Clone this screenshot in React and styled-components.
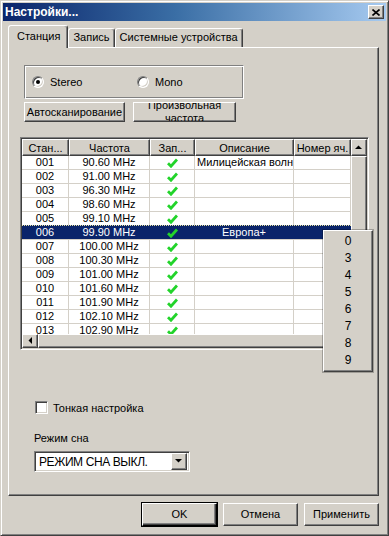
import React from "react"
import styled, { createGlobalStyle, css } from "styled-components"

const GlobalStyle = createGlobalStyle`
    * { box-sizing: border-box; }
    body {
        margin: 0;
        background: #d4d0c8;
        font-family: "Liberation Sans", Arial, sans-serif;
        font-size: 11px;
        color: #000;
    }
`

const raised = css`
    background: #d4d0c8;
    border: 1px solid;
    border-color: #fff #404040 #404040 #fff;
    box-shadow: inset -1px -1px #808080, inset 1px 1px #d4d0c8;
`
const sunken = css`
    border: 1px solid;
    border-color: #808080 #fff #fff #808080;
    box-shadow: inset 1px 1px #404040, inset -1px -1px #d4d0c8;
`

const Window = styled.div`
    width: 389px;
    height: 536px;
    background: #d4d0c8;
    border: 1px solid;
    border-color: #d4d0c8 #404040 #404040 #d4d0c8;
    box-shadow: inset 1px 1px #fff, inset -1px -1px #808080;
    padding: 2px;
    display: flex;
    flex-direction: column;
`
const TitleBar = styled.div`
    height: 18px;
    display: flex;
    align-items: center;
    justify-content: space-between;
    padding: 0 2px 0 2px;
    background: linear-gradient(to right, #0a246a 0%, #3a6ea5 45%, #a6caf0 100%);
`
const TitleText = styled.div`
    color: #fff;
    font-weight: bold;
    font-size: 12px;
`
const CloseButton = styled.div`
    ${raised};
    width: 16px;
    height: 14px;
    display: flex;
    align-items: center;
    justify-content: center;
`
const Body = styled.div`
    padding: 4px 7px 0 5px;
    display: flex;
    flex-direction: column;
`
const TabRow = styled.div`
    height: 23px;
    margin-bottom: -1px;
    display: flex;
    align-items: flex-end;
    position: relative;
    z-index: 1;
`
const Tab = styled.div`
    height: ${p => (p.$active ? "23px" : "19px")};
    margin-bottom: ${p => (p.$active ? "0" : "1px")};
    padding: ${p => (p.$active ? "4px 7px 0 8px" : "2px 4px 0 4px")};
    background: #d4d0c8;
    border: 1px solid;
    border-bottom: none;
    border-color: #fff #404040 transparent #fff;
    border-radius: 3px 3px 0 0;
    box-shadow: inset -1px 0 #808080;
    white-space: nowrap;
`
const Panel = styled.div`
    height: 449px;
    position: relative;
    border: 1px solid;
    border-color: #fff #404040 #404040 #fff;
    box-shadow: inset -1px -1px #808080;
    display: flex;
    flex-direction: column;
`
const GroupBox = styled.div`
    margin: 17px 0 0 15px;
    width: 220px;
    height: 34px;
    border: 1px solid;
    border-color: #808080 #fff #fff #808080;
    box-shadow: inset 1px 1px #fff, inset -1px -1px #808080;
    display: flex;
    align-items: center;
    padding-left: 7px;
`
const RadioItem = styled.label`
    width: 105px;
    display: flex;
    align-items: center;
    gap: 6px;
`
const RadioCircle = styled.span`
    width: 12px;
    height: 12px;
    border-radius: 50%;
    background: #fff;
    border: 1px solid;
    border-color: #808080 #fff #fff #808080;
    box-shadow: inset 1px 1px #404040, inset -1px -1px #d4d0c8;
    display: flex;
    align-items: center;
    justify-content: center;
    &::after {
        content: "";
        width: 4px;
        height: 4px;
        border-radius: 50%;
        background: ${p => (p.$checked ? "#000" : "transparent")};
    }
`
const ButtonRow = styled.div`
    margin: 3px 0 0 15px;
    display: flex;
    gap: 8px;
`
const Button = styled.div`
    ${raised};
    width: ${p => p.$w}px;
    height: ${p => p.$h || 20}px;
    display: flex;
    flex-direction: column;
    align-items: center;
    justify-content: center;
    overflow: hidden;
    line-height: 13px;
    white-space: nowrap;
    ${p => p.$default && css`
        outline: 1px solid #000;
        outline-offset: 0;
        border-color: #fff #000 #000 #fff;
        box-shadow: inset -1px -1px #404040, inset -2px -2px #808080;
    `}
`
const Table = styled.div`
    ${sunken};
    margin: 15px 0 0 11px;
    width: 349px;
    height: 213px;
    padding: 1px;
    background: #fff;
    display: grid;
    grid-template-columns: 329px 16px;
    grid-template-rows: 195px 14px;
`
const Grid = styled.div`
    overflow: hidden;
    display: flex;
    flex-direction: column;
`
const columns = "47px 81px 45px 99px 57px"
const HeaderRow = styled.div`
    display: grid;
    grid-template-columns: ${columns};
    height: 17px;
    flex-shrink: 0;
`
const HeaderCell = styled.div`
    ${raised};
    display: flex;
    align-items: center;
    justify-content: center;
    white-space: nowrap;
    overflow: hidden;
`
const Row = styled.div`
    display: grid;
    grid-template-columns: ${columns};
    height: 14px;
    flex-shrink: 0;
    border-bottom: 1px solid #d4d0c8;
    background: ${p => (p.$selected ? "#0a246a" : "#fff")};
    color: ${p => (p.$selected ? "#fff" : "#000")};
    ${p => p.$selected && css`
        border-top: 1px dotted #e8e4a0;
        margin-top: -1px;
        height: 15px;
    `}
`
const Cell = styled.div`
    border-right: 1px solid ${p => (p.$selected ? "#0a246a" : "#d4d0c8")};
    display: flex;
    align-items: center;
    justify-content: ${p => (p.$left ? "flex-start" : "center")};
    padding-left: ${p => (p.$left ? "2px" : "0")};
    white-space: nowrap;
    overflow: hidden;
    line-height: 13px;
`
const VScroll = styled.div`
    background: #e6e3de;
    display: flex;
    flex-direction: column;
`
const ScrollButton = styled.div`
    ${raised};
    width: ${p => p.$w}px;
    height: ${p => p.$h}px;
    flex-shrink: 0;
    display: flex;
    align-items: center;
    justify-content: center;
`
const VThumb = styled.div`
    ${raised};
    height: 140px;
`
const HScroll = styled.div`
    grid-column: 1 / span 2;
    background: #e6e3de;
    display: flex;
`
const HThumb = styled.div`
    ${raised};
    width: 300px;
`
const CheckRow = styled.label`
    margin: 51px 0 0 26px;
    display: flex;
    align-items: center;
    gap: 5px;
`
const CheckBox = styled.span`
    width: 13px;
    height: 13px;
    background: #fff;
    ${sunken};
`
const Label = styled.div`
    margin: 18px 0 0 25px;
    height: 13px;
    line-height: 13px;
`
const Select = styled.div`
    ${sunken};
    margin: 6px 0 0 25px;
    width: 156px;
    height: 21px;
    background: #fff;
    display: flex;
    align-items: center;
    justify-content: space-between;
    padding: 2px 2px 2px 4px;
    font-size: 12px;
    letter-spacing: -0.4px;
`
const Popup = styled.div`
    ${raised};
    position: absolute;
    left: 314px;
    top: 182px;
    width: 50px;
    height: 142px;
    padding: 1px 2px;
    z-index: 2;
    outline: 1px solid rgba(0, 0, 0, 0.25);
    outline-offset: 0;
`
const PopupItem = styled.div`
    height: 17px;
    display: flex;
    align-items: center;
    justify-content: center;
    font-size: 12px;
`
const Footer = styled.div`
    margin-top: 7px;
    display: flex;
    justify-content: flex-end;
    gap: 6px;
`

const Check = () => (
    <svg width="11" height="10" viewBox="0 0 11 10">
        <path d="M1 5.2 L4 8.2 L10 1.5" fill="none" stroke="#22d42a" strokeWidth="2.8" />
    </svg>
)

const Arrow = ({ dir }) => {
    const pts = {
        up: "0,4 7,4 3.5,0.5",
        down: "0,0 7,0 3.5,3.5",
        left: "4,0 4,7 0.5,3.5",
    }[dir]
    const w = dir === "left" ? 5 : 8
    const h = dir === "left" ? 8 : 5
    return (
        <svg width={w} height={h} viewBox={`0 0 ${w} ${h}`}>
            <polygon points={pts} fill="#000" />
        </svg>
    )
}

const stations = [
    ["001", "90.60 MHz", "Милицейская волна"],
    ["002", "91.00 MHz", ""],
    ["003", "96.30 MHz", ""],
    ["004", "98.60 MHz", ""],
    ["005", "99.10 MHz", ""],
    ["006", "99.90 MHz", "Европа+"],
    ["007", "100.00 MHz", ""],
    ["008", "100.30 MHz", ""],
    ["009", "101.00 MHz", ""],
    ["010", "101.60 MHz", ""],
    ["011", "101.90 MHz", ""],
    ["012", "102.10 MHz", ""],
    ["013", "102.90 MHz", ""],
    ["014", "103.40 MHz", ""],
]

const menuItems = ["0", "3", "4", "5", "6", "7", "8", "9"]

class App extends React.Component {
    showRows = () => {
        return stations.map(([num, freq, desc]) => {
            const selected = num === "006"
            return (
                <Row key={num} $selected={selected}>
                    <Cell $selected={selected}>{num}</Cell>
                    <Cell $selected={selected}>{freq}</Cell>
                    <Cell $selected={selected}><Check /></Cell>
                    <Cell $selected={selected} $left={desc.length > 12}>{desc}</Cell>
                    <Cell $selected={selected}></Cell>
                </Row>
            )
        })
    }

    render() {
        return (
            <>
                <GlobalStyle />
                <Window>
                    <TitleBar>
                        <TitleText>Настройки...</TitleText>
                        <CloseButton>
                            <svg width="8" height="7" viewBox="0 0 8 7">
                                <path d="M0.5 0.5 L7.5 6.5 M7.5 0.5 L0.5 6.5" stroke="#000" strokeWidth="1.6" />
                            </svg>
                        </CloseButton>
                    </TitleBar>
                    <Body>
                        <TabRow>
                            <Tab $active>Станция</Tab>
                            <Tab>Запись</Tab>
                            <Tab>Системные устройства</Tab>
                        </TabRow>
                        <Panel>
                            <GroupBox>
                                <RadioItem><RadioCircle $checked />Stereo</RadioItem>
                                <RadioItem><RadioCircle />Mono</RadioItem>
                            </GroupBox>
                            <ButtonRow>
                                <Button $w={101}>Автосканирование</Button>
                                <Button $w={103}>
                                    <span>Произвольная</span>
                                    <span>частота</span>
                                </Button>
                            </ButtonRow>
                            <Table>
                                <Grid>
                                    <HeaderRow>
                                        <HeaderCell>Стан...</HeaderCell>
                                        <HeaderCell>Частота</HeaderCell>
                                        <HeaderCell>Зап...</HeaderCell>
                                        <HeaderCell>Описание</HeaderCell>
                                        <HeaderCell>Номер яч.</HeaderCell>
                                    </HeaderRow>
                                    {this.showRows()}
                                </Grid>
                                <VScroll>
                                    <ScrollButton $w={16} $h={17}><Arrow dir="up" /></ScrollButton>
                                    <VThumb />
                                </VScroll>
                                <HScroll>
                                    <ScrollButton $w={16} $h={14}><Arrow dir="left" /></ScrollButton>
                                    <HThumb />
                                </HScroll>
                            </Table>
                            <CheckRow><CheckBox />Тонкая настройка</CheckRow>
                            <Label>Режим сна</Label>
                            <Select>
                                <span>РЕЖИМ СНА ВЫКЛ.</span>
                                <ScrollButton $w={16} $h={17}><Arrow dir="down" /></ScrollButton>
                            </Select>
                            <Popup>
                                {menuItems.map(item => (
                                    <PopupItem key={item}>{item}</PopupItem>
                                ))}
                            </Popup>
                        </Panel>
                        <Footer>
                            <Button $w={75} $h={23} $default>OK</Button>
                            <Button $w={75} $h={23}>Отмена</Button>
                            <Button $w={75} $h={23}>Применить</Button>
                        </Footer>
                    </Body>
                </Window>
            </>
        )
    }
}

export default App
